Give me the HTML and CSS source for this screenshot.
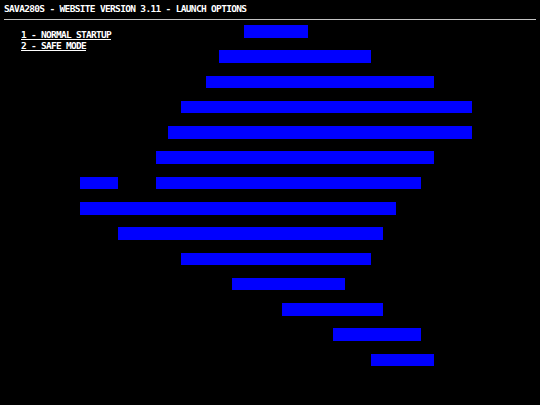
FILE: index.html
```html
<!DOCTYPE html>
<html>
<head>
<meta charset="utf-8">
<title>SAVA280S - Launch Options</title>
<link rel="stylesheet" href="styles.css">
</head>
<body>
<header class="top">
  <h1 class="title">SAVA280S - WEBSITE VERSION 3.11 - LAUNCH OPTIONS</h1>
  <div class="rule"></div>
</header>
<main class="stage">
  <nav class="menu">
    <a class="opt" href="#normal">1 - NORMAL STARTUP</a>
    <a class="opt" href="#safe">2 - SAFE MODE</a>
  </nav>
  <div class="bar b0"></div>
  <div class="bar b1"></div>
  <div class="bar b2"></div>
  <div class="bar b3"></div>
  <div class="bar b4"></div>
  <div class="bar b5"></div>
  <div class="bar b6a"></div>
  <div class="bar b6b"></div>
  <div class="bar b7"></div>
  <div class="bar b8"></div>
  <div class="bar b9"></div>
  <div class="bar b10"></div>
  <div class="bar b11"></div>
  <div class="bar b12"></div>
  <div class="bar b13"></div>
</main>
</body>
</html>
```
FILE: styles.css
```css
html, body {
  margin: 0;
  padding: 0;
  background: #000;
  color: #fff;
  font-family: "DejaVu Sans Mono", "Liberation Mono", monospace;
}

.top {
  padding: 4px 4px 0 4px;
}

.title {
  margin: 0;
  font-size: 9.5px;
  line-height: 10px;
  font-weight: bold;
  letter-spacing: -0.67px;
  color: #fff;
  white-space: nowrap;
}

.rule {
  margin-top: 5px;
  height: 1px;
  background: #c4c4c4;
}

.stage {
  margin: 5px 0 0 4.13px;
  display: grid;
  grid-template-columns: repeat(37, 12.645px);
  grid-template-rows: repeat(27, 12.645px);
}

.menu {
  grid-column: 1 / 19;
  grid-row: 1 / 4;
  padding: 5px 0 0 16.9px;
  display: flex;
  flex-direction: column;
  align-items: flex-start;
  z-index: 1;
}

.opt {
  color: #fff;
  font-size: 9.5px;
  line-height: 10.5px;
  font-weight: bold;
  letter-spacing: -0.72px;
  text-decoration: underline;
  text-underline-offset: 1px;
  white-space: nowrap;
}

.bar {
  background: #0000ff;
}

.b0  { grid-area: 1 / 20 / 2 / 25; }
.b1  { grid-area: 3 / 18 / 4 / 30; }
.b2  { grid-area: 5 / 17 / 6 / 35; }
.b3  { grid-area: 7 / 15 / 8 / 38; }
.b4  { grid-area: 9 / 14 / 10 / 38; }
.b5  { grid-area: 11 / 13 / 12 / 35; }
.b6a { grid-area: 13 / 7 / 14 / 10; }
.b6b { grid-area: 13 / 13 / 14 / 34; }
.b7  { grid-area: 15 / 7 / 16 / 32; }
.b8  { grid-area: 17 / 10 / 18 / 31; }
.b9  { grid-area: 19 / 15 / 20 / 30; }
.b10 { grid-area: 21 / 19 / 22 / 28; }
.b11 { grid-area: 23 / 23 / 24 / 31; }
.b12 { grid-area: 25 / 27 / 26 / 34; }
.b13 { grid-area: 27 / 30 / 28 / 35; }
```
